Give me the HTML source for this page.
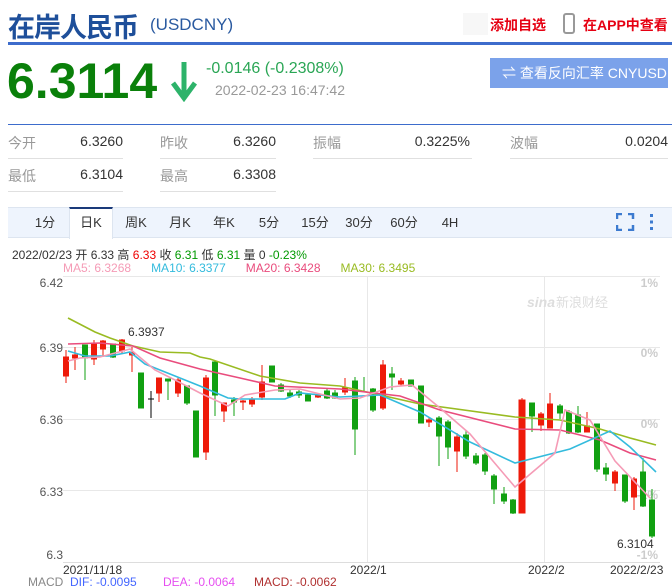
<!DOCTYPE html>
<html><head><meta charset="utf-8"><style>
*{margin:0;padding:0;box-sizing:border-box}
body{width:672px;height:587px;background:#fff;position:relative;overflow:hidden;font-family:"Liberation Sans","Noto Sans CJK SC",sans-serif}
.a{position:absolute;white-space:nowrap}
.lbl{color:#999;font-size:14px}
.val{color:#333;font-size:14px;text-align:right}
.ul{position:absolute;height:1px;background:#e0e0e0}
.tab{position:absolute;top:207px;height:31px;line-height:31px;font-size:13px;color:#333;text-align:center;width:44px}
</style></head><body>
<div class="a" style="left:8px;top:6px;font-size:27px;font-weight:bold;color:#1e4f9a;letter-spacing:-1px">在岸人民币</div>
<div class="a" style="left:150px;top:15px;font-size:17px;color:#2a5aa0">(USDCNY)</div>
<div class="a" style="left:463px;top:13px;width:25px;height:22px;background:#f7f7f7"></div>
<div class="a" style="left:490px;top:15px;font-size:14px;font-weight:bold;color:#e60012">添加自选</div>
<div class="a" style="left:563px;top:13px;width:12px;height:21px;border:2px solid #999;border-radius:3px"></div>
<div class="a" style="left:583px;top:15px;font-size:14px;font-weight:bold;color:#e60012">在APP中查看</div>
<div class="a" style="left:8px;top:42px;width:664px;height:3px;background:#3d6ccc"></div>

<div class="a" style="left:7px;top:52px;font-size:50px;font-weight:bold;color:#0a800a;letter-spacing:0px">6.3114</div>
<svg class="a" style="left:170px;top:60px" width="28" height="42"><path d="M14 2V36" stroke="#2db36a" stroke-width="5"/><path d="M3 23L14 38L25 23" stroke="#2db36a" stroke-width="5" fill="none"/></svg>
<div class="a" style="left:206px;top:60px;font-size:16px;color:#2aa655">-0.0146 (-0.2308%)</div>
<div class="a" style="left:215px;top:82px;font-size:14px;color:#999">2022-02-23 16:47:42</div>
<div class="a" style="left:490px;top:58px;width:178px;height:30px;background:#7ba2ea;color:#fff;font-size:14px;line-height:30px;padding-left:12px">⇌ 查看反向汇率 CNYUSD</div>

<div class="a" style="left:8px;top:124px;width:664px;height:1px;background:#3d6ccc"></div>
<div class="a lbl" style="left:8px;top:133px">今开</div><div class="a val" style="left:40px;width:83px;top:133px">6.3260</div>
<div class="a lbl" style="left:160px;top:133px">昨收</div><div class="a val" style="left:190px;width:86px;top:133px">6.3260</div>
<div class="a lbl" style="left:313px;top:133px">振幅</div><div class="a val" style="left:380px;width:90px;top:133px">0.3225%</div>
<div class="a lbl" style="left:510px;top:133px">波幅</div><div class="a val" style="left:580px;width:88px;top:133px">0.0204</div>
<div class="ul" style="left:8px;width:115px;top:158px"></div><div class="ul" style="left:160px;width:116px;top:158px"></div>
<div class="ul" style="left:313px;width:159px;top:158px"></div><div class="ul" style="left:510px;width:158px;top:158px"></div>
<div class="a lbl" style="left:8px;top:166px">最低</div><div class="a val" style="left:40px;width:83px;top:166px">6.3104</div>
<div class="a lbl" style="left:160px;top:166px">最高</div><div class="a val" style="left:190px;width:86px;top:166px">6.3308</div>
<div class="ul" style="left:8px;width:115px;top:191px"></div><div class="ul" style="left:160px;width:116px;top:191px"></div>

<div class="a" style="left:8px;top:207px;width:664px;height:31px;background:#eef4fd;border-top:1px solid #dde5f0;border-bottom:1px solid #dde5f0"></div>
<div class="a" style="left:69px;top:207px;width:44px;height:32px;background:#fff;border-top:2px solid #1a3a7a;border-left:1px solid #dde5f0;border-right:1px solid #dde5f0"></div>
<div class="tab" style="left:23px">1分</div><div class="tab" style="left:69px">日K</div><div class="tab" style="left:114px">周K</div><div class="tab" style="left:158px">月K</div><div class="tab" style="left:202px">年K</div><div class="tab" style="left:247px">5分</div><div class="tab" style="left:293px">15分</div><div class="tab" style="left:337px">30分</div><div class="tab" style="left:382px">60分</div><div class="tab" style="left:428px">4H</div>
<svg class="a" style="left:616px;top:213px" width="44" height="18"><path d="M1 6V1H6M12 1H17V6M17 12V17H12M6 17H1V12" stroke="#3d7bd0" stroke-width="2.5" fill="none"/><rect x="34" y="1" width="3" height="3" fill="#3d7bd0"/><rect x="34" y="7.5" width="3" height="3" fill="#3d7bd0"/><rect x="34" y="14" width="3" height="3" fill="#3d7bd0"/></svg>

<div class="a" style="left:12px;top:246px;font-size:12px;color:#333">2022/02/23 开 6.33 高 <span style="color:#e00">6.33</span> 收 <span style="color:#090">6.31</span> 低 <span style="color:#090">6.31</span> 量 0 <span style="color:#090">-0.23%</span></div>
<div class="a" style="left:63px;top:261px;font-size:12px"><span style="color:#f59bb6">MA5: 6.3268</span>&nbsp;&nbsp;&nbsp;&nbsp;&nbsp;&nbsp;<span style="color:#33bbdd">MA10: 6.3377</span>&nbsp;&nbsp;&nbsp;&nbsp;&nbsp;&nbsp;<span style="color:#e94c7d">MA20: 6.3428</span>&nbsp;&nbsp;&nbsp;&nbsp;&nbsp;&nbsp;<span style="color:#99bb22">MA30: 6.3495</span></div>

<svg class="a" style="left:0;top:0" width="672" height="587" font-family="Liberation Sans, sans-serif">
<g stroke="#e8e8e8" stroke-width="1"><path d="M63 276.5H660M63 347.5H660M63 419.5H660M63 490.5H660M367.5 276V562M544.5 276V562"/></g>
<path d="M63 562.5H660" stroke="#ddd"/>
<g font-size="12" fill="#555" text-anchor="end"><text x="63" y="287">6.42</text><text x="63" y="352">6.39</text><text x="63" y="424">6.36</text><text x="63" y="496">6.33</text><text x="63" y="559">6.3</text></g>
<g font-size="12" fill="#ccc" text-anchor="end" font-weight="bold"><text x="658" y="287">1%</text><text x="658" y="357">0%</text><text x="658" y="428">0%</text><text x="658" y="499">-1%</text><text x="658" y="559">-1%</text></g>
<text x="527" y="307" font-size="14" fill="#ddd" font-style="italic" font-weight="bold">sina</text><text x="556" y="307" font-size="13" fill="#ddd">新浪财经</text>
<g font-size="12" fill="#333"><text x="63" y="574">2021/11/18</text><text x="350" y="574">2022/1</text><text x="528" y="574">2022/2</text><text x="610" y="574">2022/2/23</text><text x="128" y="336">6.3937</text><text x="617" y="548">6.3104</text></g>
<g font-size="12"><text x="28" y="586" fill="#888">MACD</text><text x="70" y="586" fill="#4466ff">DIF: -0.0095</text><text x="163" y="586" fill="#e64ef0">DEA: -0.0064</text><text x="254" y="586" fill="#b03030">MACD: -0.0062</text></g>

<g stroke="#ee1a0a" fill="#ee1a0a">
<line x1="66" y1="350" x2="66" y2="383"/><rect x="63.5" y="357" width="5" height="19"/>
<line x1="75" y1="347" x2="75" y2="370"/><rect x="72.5" y="355" width="5" height="3"/>
<line x1="94" y1="340" x2="94" y2="365"/><rect x="91.5" y="343" width="5" height="16"/>
<line x1="103" y1="340" x2="103" y2="357"/><rect x="100.5" y="341" width="5" height="8"/>
<line x1="122" y1="339" x2="122" y2="353"/><rect x="119.5" y="340" width="5" height="11"/>
<line x1="132" y1="347" x2="132" y2="372"/><rect x="129.5" y="353" width="5" height="2"/>
<line x1="159" y1="378" x2="159" y2="402"/><rect x="156.5" y="378" width="5" height="15"/>
<line x1="178" y1="378" x2="178" y2="397"/><rect x="175.5" y="380" width="5" height="13"/>
<line x1="206" y1="375" x2="206" y2="460"/><rect x="203.5" y="378" width="5" height="74"/>
<line x1="224" y1="403" x2="224" y2="422"/><rect x="221.5" y="403" width="5" height="8"/>
<line x1="243" y1="400" x2="243" y2="410"/><rect x="240.5" y="401" width="5" height="1"/>
<line x1="252" y1="397" x2="252" y2="407"/><rect x="249.5" y="400" width="5" height="4"/>
<line x1="262" y1="365" x2="262" y2="400"/><rect x="259.5" y="382" width="5" height="15"/>
<line x1="318" y1="393" x2="318" y2="398"/><rect x="315.5" y="395" width="5" height="2"/>
<line x1="345" y1="378" x2="345" y2="395"/><rect x="342.5" y="388" width="5" height="4"/>
<line x1="383" y1="360" x2="383" y2="410"/><rect x="380.5" y="365" width="5" height="43"/>
<line x1="401" y1="378" x2="401" y2="386"/><rect x="398.5" y="381" width="5" height="3"/>
<line x1="429" y1="418" x2="429" y2="427"/><rect x="426.5" y="420" width="5" height="2"/>
<line x1="457" y1="433" x2="457" y2="472"/><rect x="454.5" y="437" width="5" height="14"/>
<line x1="522" y1="398" x2="522" y2="513"/><rect x="519" y="400" width="6" height="113"/>
<line x1="541" y1="412" x2="541" y2="431"/><rect x="538.5" y="414" width="5" height="11"/>
<line x1="550" y1="393" x2="550" y2="428"/><rect x="547.5" y="404" width="5" height="24"/>
<line x1="587" y1="412" x2="587" y2="432"/><rect x="584.5" y="426" width="5" height="6"/>
<line x1="615" y1="470" x2="615" y2="491"/><rect x="612.5" y="472" width="5" height="11"/>
<line x1="634" y1="477" x2="634" y2="510"/><rect x="631.5" y="479" width="5" height="18"/>
</g>
<g stroke="#11a011" fill="#11a011">
<line x1="85" y1="345" x2="85" y2="380"/><rect x="82.5" y="345" width="5" height="13"/>
<line x1="113" y1="344" x2="113" y2="358"/><rect x="110.5" y="344" width="5" height="13"/>
<rect x="138.5" y="373" width="5" height="35"/>
<line x1="168" y1="379" x2="168" y2="400"/><rect x="165.5" y="379" width="5" height="2"/>
<line x1="187" y1="386" x2="187" y2="405"/><rect x="184.5" y="386" width="5" height="17"/>
<rect x="193.5" y="411" width="5" height="46"/>
<line x1="215" y1="362" x2="215" y2="416"/><rect x="212.5" y="362" width="5" height="33"/>
<line x1="234" y1="397" x2="234" y2="416"/><rect x="231.5" y="400" width="5" height="2"/>
<rect x="269.5" y="366" width="5" height="16"/>
<line x1="281" y1="383" x2="281" y2="392"/><rect x="278.5" y="385" width="5" height="6"/>
<line x1="290" y1="390" x2="290" y2="398"/><rect x="287.5" y="393" width="5" height="3"/>
<line x1="299" y1="390" x2="299" y2="398"/><rect x="296.5" y="392" width="5" height="3"/>
<rect x="305.5" y="395" width="5" height="6"/>
<line x1="327" y1="389" x2="327" y2="399"/><rect x="324.5" y="391" width="5" height="7"/>
<line x1="335" y1="390" x2="335" y2="399"/><rect x="332.5" y="393" width="5" height="5"/>
<line x1="355" y1="377" x2="355" y2="455"/><rect x="352.5" y="381" width="5" height="48"/>
<line x1="364" y1="377" x2="364" y2="392"/>
<line x1="373" y1="388" x2="373" y2="412"/><rect x="370.5" y="389" width="5" height="21"/>
<line x1="392" y1="367" x2="392" y2="390"/><rect x="389.5" y="374" width="5" height="3"/>
<rect x="408.5" y="380" width="5" height="6"/>
<rect x="418.5" y="386" width="5" height="37"/>
<line x1="439" y1="416" x2="439" y2="466"/><rect x="436.5" y="418" width="5" height="18"/>
<line x1="448" y1="420" x2="448" y2="459"/><rect x="445.5" y="422" width="5" height="25"/>
<line x1="466" y1="430" x2="466" y2="459"/><rect x="463.5" y="435" width="5" height="21"/>
<line x1="476" y1="453" x2="476" y2="465"/><rect x="473.5" y="456" width="5" height="7"/>
<line x1="485" y1="453" x2="485" y2="475"/><rect x="482.5" y="455" width="5" height="16"/>
<line x1="494" y1="474" x2="494" y2="504"/><rect x="491.5" y="476" width="5" height="13"/>
<line x1="504" y1="487" x2="504" y2="504"/><rect x="501.5" y="494" width="5" height="7"/>
<line x1="513" y1="499" x2="513" y2="514"/><rect x="510.5" y="500" width="5" height="13"/>
<line x1="532" y1="403" x2="532" y2="432"/><rect x="529.5" y="403" width="5" height="13"/>
<line x1="560" y1="404" x2="560" y2="419"/><rect x="557.5" y="406" width="5" height="7"/>
<line x1="569" y1="410" x2="569" y2="434"/><rect x="566.5" y="412" width="5" height="21"/>
<line x1="578" y1="406" x2="578" y2="433"/><rect x="575.5" y="415" width="5" height="17"/>
<line x1="597" y1="424" x2="597" y2="472"/><rect x="594.5" y="424" width="5" height="45"/>
<line x1="606" y1="463" x2="606" y2="481"/><rect x="603.5" y="468" width="5" height="6"/>
<line x1="625" y1="475" x2="625" y2="503"/><rect x="622.5" y="475" width="5" height="26"/>
<line x1="643" y1="458" x2="643" y2="507"/><rect x="640.5" y="472" width="5" height="34"/>
<line x1="652" y1="489" x2="652" y2="538"/><rect x="649.5" y="500" width="5" height="36"/>
</g>
<path d="M151 391V418M148 399H154" stroke="#000" stroke-width="1"/>
<g fill="none" stroke-width="1.6">
<polyline stroke="#99bb22" points="68,318 95,332 110,338 133,346 160,352 190,353 200,357 210,359 260,376 300,383 340,386 420,404 515,417 560,420 600,429 630,438 656,445"/>
<polyline stroke="#e94c7d" points="68,344 100,343 133,346 160,358 200,369 240,378 275,386 340,389 400,396 440,410 515,429 560,430 600,440 630,453 656,460"/>
<polyline stroke="#33bbdd" points="68,351 85,356 110,356 130,352 145,364 175,376 200,386 228,398 240,399 285,399 300,393 340,397 380,395 420,412 470,442 515,463 570,449 610,431 630,447 656,472"/>
<polyline stroke="#f59bb6" points="68,361 80,358 100,357 130,349 155,370 175,380 200,393 228,406 245,395 275,390 300,389 340,399 360,398 390,387 412,385 440,408 470,434 515,487 555,453 565,410 590,420 615,461 650,498"/>
</g>
</svg>
</body></html>
